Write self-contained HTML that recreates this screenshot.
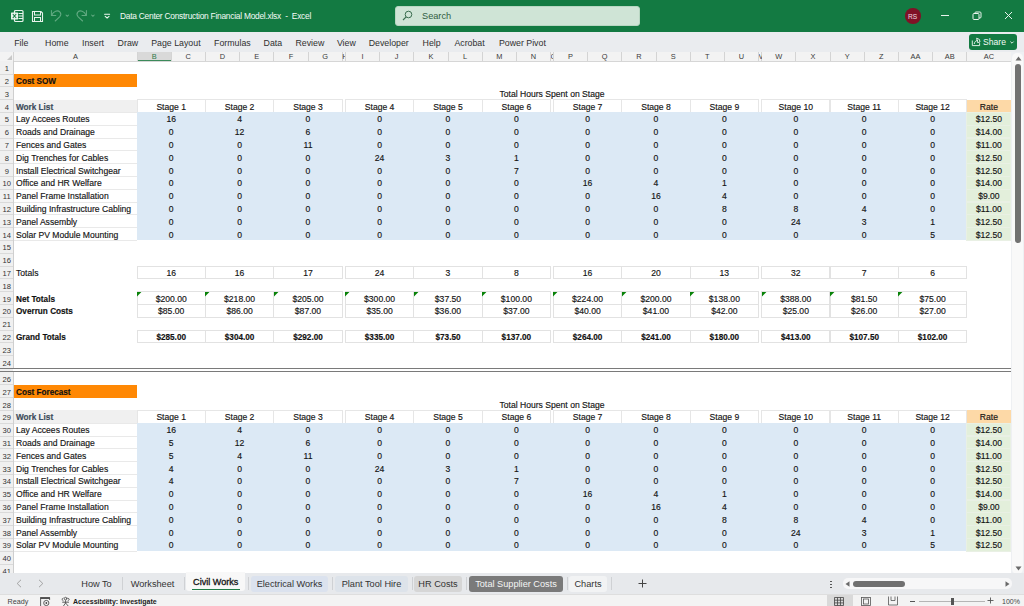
<!DOCTYPE html><html><head><meta charset="utf-8"><title>Excel</title><style>
*{margin:0;padding:0;box-sizing:border-box}
html,body{width:1024px;height:606px;overflow:hidden;background:#fff;font-family:"Liberation Sans", sans-serif;}
body{position:relative}
.a{position:absolute}
.t{position:absolute;white-space:nowrap;font-size:8.6px;color:#141414;line-height:12px;height:12px;-webkit-text-stroke:0.15px #141414}
.c{text-align:center}
.b{font-weight:bold}
.t[style*=bold]{font-size:8.2px}
.hl{position:absolute;height:1px}
.vl{position:absolute;width:1px}
</style></head><body>
<div class="a" style="left:0;top:0;width:1024px;height:32px;background:#137a42"></div>
<svg class="a" style="left:9.5px;top:9px" width="14" height="14" viewBox="0 0 14 14"><rect x="4.5" y="1.5" width="8.5" height="11" rx="1" fill="none" stroke="#e8f3ec" stroke-width="1.2"/><line x1="8.5" y1="4.5" x2="13" y2="4.5" stroke="#e8f3ec" stroke-width="1"/><line x1="8.5" y1="7" x2="13" y2="7" stroke="#e8f3ec" stroke-width="1"/><line x1="8.5" y1="9.5" x2="13" y2="9.5" stroke="#e8f3ec" stroke-width="1"/><rect x="1" y="3.5" width="7" height="7" rx="0.5" fill="#e8f3ec"/><path d="M2.8 5 L6.2 9 M6.2 5 L2.8 9" stroke="#137a42" stroke-width="1.1"/></svg>
<svg class="a" style="left:31px;top:10px" width="13" height="13" viewBox="0 0 13 13"><path d="M1.5 1.5 H10 L11.5 3 V11.5 H1.5 Z" fill="none" stroke="#e8f3ec" stroke-width="1.1"/><rect x="3.5" y="1.5" width="6" height="3.5" fill="none" stroke="#e8f3ec" stroke-width="1"/><rect x="3.5" y="7.5" width="6" height="4" fill="none" stroke="#e8f3ec" stroke-width="1"/></svg>
<svg class="a" style="left:0;top:0" width="120" height="32" viewBox="0 0 120 32"><g fill="none" stroke="#62aa82" stroke-width="1.05" stroke-linecap="round" stroke-linejoin="round"><path d="M51.4 10.6 V15.4 H55.8"/><path d="M51.8 15 C53.5 11.2 57.6 9.6 60 12.2 C61.3 13.8 60.8 15.6 59.6 16.8 L55.2 21"/><path d="M66 15 L67.3 16.3 L68.6 15"/><path d="M86.4 10.6 V15.4 H82"/><path d="M86 15 C84.3 11.2 80.2 9.6 77.8 12.2 C76.5 13.8 77 15.6 78.2 16.8 L82.6 21"/><path d="M91.6 15 L92.9 16.3 L94.2 15"/></g><g fill="none" stroke="#eef7f1" stroke-width="1.1" stroke-linecap="round"><path d="M104.6 14.2 H109.6"/><path d="M105.2 16.4 L107.1 18 L109 16.4"/></g></svg>
<div class="a" style="left:120px;top:10px;font-size:8.4px;letter-spacing:-0.25px;color:#f4faf6;white-space:nowrap;line-height:12px">Data Center Construction Financial Model.xlsx&nbsp; -&nbsp; Excel</div>
<div class="a" style="left:395px;top:5.5px;width:245px;height:20.5px;background:#cfe4d6;border-radius:3px;border:1px solid #b8d6c2"></div>
<svg class="a" style="left:402px;top:10px" width="11" height="11" viewBox="0 0 11 11"><circle cx="6.5" cy="4.5" r="3.3" fill="none" stroke="#3b6e50" stroke-width="1"/><line x1="4.2" y1="6.8" x2="1" y2="10" stroke="#3b6e50" stroke-width="1.1"/></svg>
<div class="a" style="left:422px;top:10px;font-size:9.2px;color:#2f5d42;line-height:12px">Search</div>
<div class="a" style="left:905px;top:8px;width:15.5px;height:15.5px;border-radius:50%;background:#7f1226"></div>
<div class="a" style="left:904.8px;top:11.5px;width:15.5px;text-align:center;font-size:6.6px;color:#f2dfe2;line-height:9px">RS</div>
<div class="a" style="left:941px;top:15px;width:7.5px;height:1px;background:#e8f3ec"></div>
<svg class="a" style="left:972px;top:11px" width="10" height="10" viewBox="0 0 10 10"><rect x="1" y="2.5" width="6" height="6" rx="1" fill="none" stroke="#e8f3ec" stroke-width="1"/><path d="M3 2.5 V1.8 Q3 1 4 1 H8 Q9 1 9 2 V6 Q9 7 8 7 H7" fill="none" stroke="#e8f3ec" stroke-width="1"/></svg>
<svg class="a" style="left:1003.5px;top:11px" width="9" height="9" viewBox="0 0 9 9"><path d="M1 1 L8 8 M8 1 L1 8" stroke="#e8f3ec" stroke-width="1"/></svg>
<div class="a" style="left:0;top:32px;width:1024px;height:19.5px;background:#eaecef"></div>
<div class="a" style="left:14.2px;top:37px;font-size:8.8px;color:#303030;line-height:12px;white-space:nowrap">File</div>
<div class="a" style="left:45.1px;top:37px;font-size:8.8px;color:#303030;line-height:12px;white-space:nowrap">Home</div>
<div class="a" style="left:82px;top:37px;font-size:8.8px;color:#303030;line-height:12px;white-space:nowrap">Insert</div>
<div class="a" style="left:117.6px;top:37px;font-size:8.8px;color:#303030;line-height:12px;white-space:nowrap">Draw</div>
<div class="a" style="left:151.2px;top:37px;font-size:8.8px;color:#303030;line-height:12px;white-space:nowrap">Page Layout</div>
<div class="a" style="left:214.1px;top:37px;font-size:8.8px;color:#303030;line-height:12px;white-space:nowrap">Formulas</div>
<div class="a" style="left:263.6px;top:37px;font-size:8.8px;color:#303030;line-height:12px;white-space:nowrap">Data</div>
<div class="a" style="left:295.4px;top:37px;font-size:8.8px;color:#303030;line-height:12px;white-space:nowrap">Review</div>
<div class="a" style="left:336.9px;top:37px;font-size:8.8px;color:#303030;line-height:12px;white-space:nowrap">View</div>
<div class="a" style="left:368.7px;top:37px;font-size:8.8px;color:#303030;line-height:12px;white-space:nowrap">Developer</div>
<div class="a" style="left:422.6px;top:37px;font-size:8.8px;color:#303030;line-height:12px;white-space:nowrap">Help</div>
<div class="a" style="left:454.4px;top:37px;font-size:8.8px;color:#303030;line-height:12px;white-space:nowrap">Acrobat</div>
<div class="a" style="left:498.9px;top:37px;font-size:8.8px;color:#303030;line-height:12px;white-space:nowrap">Power Pivot</div>
<div class="a" style="left:969px;top:34px;width:47.5px;height:16px;background:#137a42;border-radius:3px"></div>
<svg class="a" style="left:960px;top:30px" width="64" height="26" viewBox="0 0 64 26"><g fill="none" stroke="#f2f8f4" stroke-width="0.9" stroke-linejoin="round"><path d="M12.3 10.5 V15.6 H19.6 V13.2"/><path d="M14.2 14 C14.6 11.6 16 10.6 18 10.2"/><path d="M16.6 8.2 L19.4 9.4 L20 12 L17.6 12.6 Z"/><path d="M50.4 11.6 L52 13.2 L53.6 11.6"/></g></svg>
<div class="a" style="left:983px;top:36.5px;font-size:8.6px;color:#f4faf6;line-height:10px">Share</div>
<div class="a" style="left:0;top:52px;width:1011px;height:520.6px;background:#fff"></div>
<div class="a" style="left:0;top:52px;width:1011px;height:9.6px;background:#f3f3f3;border-bottom:1px solid #d6d6d6"></div>
<div class="a" style="left:137px;top:52px;width:34.2px;height:9.2px;background:#d9d9d9"></div>
<div class="a" style="left:137px;top:60px;width:34.2px;height:1.4px;background:#3c8a5a"></div>
<svg class="a" style="left:7px;top:54.5px" width="5" height="5" viewBox="0 0 5 5"><path d="M5 0 V5 H0 Z" fill="#c8c8c8"/></svg>
<div class="vl" style="left:136.5px;top:52px;height:9.2px;background:#d4d4d4"></div>
<div class="a" style="left:14px;top:52px;width:123px;text-align:center;font-size:7.4px;color:#3a3a3a;line-height:9px">A</div>
<div class="vl" style="left:170.7px;top:52px;height:9.2px;background:#d4d4d4"></div>
<div class="a" style="left:137px;top:52px;width:34.2px;text-align:center;font-size:7.4px;color:#2f7a4a;line-height:9px">B</div>
<div class="vl" style="left:204.9px;top:52px;height:9.2px;background:#d4d4d4"></div>
<div class="a" style="left:171.2px;top:52px;width:34.2px;text-align:center;font-size:7.4px;color:#3a3a3a;line-height:9px">C</div>
<div class="vl" style="left:239.1px;top:52px;height:9.2px;background:#d4d4d4"></div>
<div class="a" style="left:205.4px;top:52px;width:34.2px;text-align:center;font-size:7.4px;color:#3a3a3a;line-height:9px">D</div>
<div class="vl" style="left:273.3px;top:52px;height:9.2px;background:#d4d4d4"></div>
<div class="a" style="left:239.6px;top:52px;width:34.2px;text-align:center;font-size:7.4px;color:#3a3a3a;line-height:9px">E</div>
<div class="vl" style="left:307.5px;top:52px;height:9.2px;background:#d4d4d4"></div>
<div class="a" style="left:273.8px;top:52px;width:34.2px;text-align:center;font-size:7.4px;color:#3a3a3a;line-height:9px">F</div>
<div class="vl" style="left:341.7px;top:52px;height:9.2px;background:#d4d4d4"></div>
<div class="a" style="left:308px;top:52px;width:34.2px;text-align:center;font-size:7.4px;color:#3a3a3a;line-height:9px">G</div>
<div class="vl" style="left:344.9px;top:52px;height:9.2px;background:#d4d4d4"></div>
<div class="a" style="left:342.2px;top:52px;width:3.2px;overflow:hidden;text-align:center;font-size:7.6px;color:#3a3a3a;line-height:9px">H</div>
<div class="vl" style="left:379.1px;top:52px;height:9.2px;background:#d4d4d4"></div>
<div class="a" style="left:345.4px;top:52px;width:34.2px;text-align:center;font-size:7.4px;color:#3a3a3a;line-height:9px">I</div>
<div class="vl" style="left:413.3px;top:52px;height:9.2px;background:#d4d4d4"></div>
<div class="a" style="left:379.6px;top:52px;width:34.2px;text-align:center;font-size:7.4px;color:#3a3a3a;line-height:9px">J</div>
<div class="vl" style="left:447.5px;top:52px;height:9.2px;background:#d4d4d4"></div>
<div class="a" style="left:413.8px;top:52px;width:34.2px;text-align:center;font-size:7.4px;color:#3a3a3a;line-height:9px">K</div>
<div class="vl" style="left:481.7px;top:52px;height:9.2px;background:#d4d4d4"></div>
<div class="a" style="left:448px;top:52px;width:34.2px;text-align:center;font-size:7.4px;color:#3a3a3a;line-height:9px">L</div>
<div class="vl" style="left:515.9px;top:52px;height:9.2px;background:#d4d4d4"></div>
<div class="a" style="left:482.2px;top:52px;width:34.2px;text-align:center;font-size:7.4px;color:#3a3a3a;line-height:9px">M</div>
<div class="vl" style="left:550.1px;top:52px;height:9.2px;background:#d4d4d4"></div>
<div class="a" style="left:516.4px;top:52px;width:34.2px;text-align:center;font-size:7.4px;color:#3a3a3a;line-height:9px">N</div>
<div class="vl" style="left:552.9px;top:52px;height:9.2px;background:#d4d4d4"></div>
<div class="a" style="left:550.6px;top:52px;width:2.8px;overflow:hidden;text-align:center;font-size:7.6px;color:#3a3a3a;line-height:9px">O</div>
<div class="vl" style="left:587.1px;top:52px;height:9.2px;background:#d4d4d4"></div>
<div class="a" style="left:553.4px;top:52px;width:34.2px;text-align:center;font-size:7.4px;color:#3a3a3a;line-height:9px">P</div>
<div class="vl" style="left:621.3px;top:52px;height:9.2px;background:#d4d4d4"></div>
<div class="a" style="left:587.6px;top:52px;width:34.2px;text-align:center;font-size:7.4px;color:#3a3a3a;line-height:9px">Q</div>
<div class="vl" style="left:655.5px;top:52px;height:9.2px;background:#d4d4d4"></div>
<div class="a" style="left:621.8px;top:52px;width:34.2px;text-align:center;font-size:7.4px;color:#3a3a3a;line-height:9px">R</div>
<div class="vl" style="left:689.7px;top:52px;height:9.2px;background:#d4d4d4"></div>
<div class="a" style="left:656px;top:52px;width:34.2px;text-align:center;font-size:7.4px;color:#3a3a3a;line-height:9px">S</div>
<div class="vl" style="left:723.9px;top:52px;height:9.2px;background:#d4d4d4"></div>
<div class="a" style="left:690.2px;top:52px;width:34.2px;text-align:center;font-size:7.4px;color:#3a3a3a;line-height:9px">T</div>
<div class="vl" style="left:758.1px;top:52px;height:9.2px;background:#d4d4d4"></div>
<div class="a" style="left:724.4px;top:52px;width:34.2px;text-align:center;font-size:7.4px;color:#3a3a3a;line-height:9px">U</div>
<div class="vl" style="left:761.1px;top:52px;height:9.2px;background:#d4d4d4"></div>
<div class="a" style="left:758.6px;top:52px;width:3px;overflow:hidden;text-align:center;font-size:7.6px;color:#3a3a3a;line-height:9px">V</div>
<div class="vl" style="left:795.3px;top:52px;height:9.2px;background:#d4d4d4"></div>
<div class="a" style="left:761.6px;top:52px;width:34.2px;text-align:center;font-size:7.4px;color:#3a3a3a;line-height:9px">W</div>
<div class="vl" style="left:829.5px;top:52px;height:9.2px;background:#d4d4d4"></div>
<div class="a" style="left:795.8px;top:52px;width:34.2px;text-align:center;font-size:7.4px;color:#3a3a3a;line-height:9px">X</div>
<div class="vl" style="left:863.7px;top:52px;height:9.2px;background:#d4d4d4"></div>
<div class="a" style="left:830px;top:52px;width:34.2px;text-align:center;font-size:7.4px;color:#3a3a3a;line-height:9px">Y</div>
<div class="vl" style="left:897.9px;top:52px;height:9.2px;background:#d4d4d4"></div>
<div class="a" style="left:864.2px;top:52px;width:34.2px;text-align:center;font-size:7.4px;color:#3a3a3a;line-height:9px">Z</div>
<div class="vl" style="left:932.1px;top:52px;height:9.2px;background:#d4d4d4"></div>
<div class="a" style="left:898.4px;top:52px;width:34.2px;text-align:center;font-size:7.4px;color:#3a3a3a;line-height:9px">AA</div>
<div class="vl" style="left:966.3px;top:52px;height:9.2px;background:#d4d4d4"></div>
<div class="a" style="left:932.6px;top:52px;width:34.2px;text-align:center;font-size:7.4px;color:#3a3a3a;line-height:9px">AB</div>
<div class="vl" style="left:1010.5px;top:52px;height:9.2px;background:#d4d4d4"></div>
<div class="a" style="left:966.8px;top:52px;width:44.2px;text-align:center;font-size:7.4px;color:#3a3a3a;line-height:9px">AC</div>
<div class="vl" style="left:12.5px;top:52px;height:9.2px;background:#d4d4d4"></div>
<div class="a" style="left:0;top:61.2px;width:14px;height:511.40000000000003px;background:#f0f0f0;border-right:1px solid #cfcfcf"></div>
<div class="a" style="left:0;top:61.2px;width:13.5px;height:12.8px;text-align:center;font-size:7.6px;color:#333;line-height:16px;overflow:hidden">1</div>
<div class="hl" style="left:0;top:73.5px;width:13px;background:#dadada"></div>
<div class="a" style="left:0;top:74px;width:13.5px;height:12.8px;text-align:center;font-size:7.6px;color:#333;line-height:16px;overflow:hidden">2</div>
<div class="hl" style="left:0;top:86.3px;width:13px;background:#dadada"></div>
<div class="a" style="left:0;top:86.8px;width:13.5px;height:12.8px;text-align:center;font-size:7.6px;color:#333;line-height:16px;overflow:hidden">3</div>
<div class="hl" style="left:0;top:99.1px;width:13px;background:#dadada"></div>
<div class="a" style="left:0;top:99.6px;width:13.5px;height:12.8px;text-align:center;font-size:7.6px;color:#333;line-height:16px;overflow:hidden">4</div>
<div class="hl" style="left:0;top:111.9px;width:13px;background:#dadada"></div>
<div class="a" style="left:0;top:112.4px;width:13.5px;height:12.8px;text-align:center;font-size:7.6px;color:#333;line-height:16px;overflow:hidden">5</div>
<div class="hl" style="left:0;top:124.7px;width:13px;background:#dadada"></div>
<div class="a" style="left:0;top:125.2px;width:13.5px;height:12.8px;text-align:center;font-size:7.6px;color:#333;line-height:16px;overflow:hidden">6</div>
<div class="hl" style="left:0;top:137.5px;width:13px;background:#dadada"></div>
<div class="a" style="left:0;top:138px;width:13.5px;height:12.8px;text-align:center;font-size:7.6px;color:#333;line-height:16px;overflow:hidden">7</div>
<div class="hl" style="left:0;top:150.3px;width:13px;background:#dadada"></div>
<div class="a" style="left:0;top:150.8px;width:13.5px;height:12.8px;text-align:center;font-size:7.6px;color:#333;line-height:16px;overflow:hidden">8</div>
<div class="hl" style="left:0;top:163.1px;width:13px;background:#dadada"></div>
<div class="a" style="left:0;top:163.6px;width:13.5px;height:12.8px;text-align:center;font-size:7.6px;color:#333;line-height:16px;overflow:hidden">9</div>
<div class="hl" style="left:0;top:175.9px;width:13px;background:#dadada"></div>
<div class="a" style="left:0;top:176.4px;width:13.5px;height:12.8px;text-align:center;font-size:7.6px;color:#333;line-height:16px;overflow:hidden">10</div>
<div class="hl" style="left:0;top:188.7px;width:13px;background:#dadada"></div>
<div class="a" style="left:0;top:189.2px;width:13.5px;height:12.8px;text-align:center;font-size:7.6px;color:#333;line-height:16px;overflow:hidden">11</div>
<div class="hl" style="left:0;top:201.5px;width:13px;background:#dadada"></div>
<div class="a" style="left:0;top:202px;width:13.5px;height:12.8px;text-align:center;font-size:7.6px;color:#333;line-height:16px;overflow:hidden">12</div>
<div class="hl" style="left:0;top:214.3px;width:13px;background:#dadada"></div>
<div class="a" style="left:0;top:214.8px;width:13.5px;height:12.8px;text-align:center;font-size:7.6px;color:#333;line-height:16px;overflow:hidden">13</div>
<div class="hl" style="left:0;top:227.1px;width:13px;background:#dadada"></div>
<div class="a" style="left:0;top:227.6px;width:13.5px;height:12.8px;text-align:center;font-size:7.6px;color:#333;line-height:16px;overflow:hidden">14</div>
<div class="hl" style="left:0;top:239.9px;width:13px;background:#dadada"></div>
<div class="a" style="left:0;top:240.4px;width:13.5px;height:12.8px;text-align:center;font-size:7.6px;color:#333;line-height:16px;overflow:hidden">15</div>
<div class="hl" style="left:0;top:252.7px;width:13px;background:#dadada"></div>
<div class="a" style="left:0;top:253.2px;width:13.5px;height:12.8px;text-align:center;font-size:7.6px;color:#333;line-height:16px;overflow:hidden">16</div>
<div class="hl" style="left:0;top:265.5px;width:13px;background:#dadada"></div>
<div class="a" style="left:0;top:266px;width:13.5px;height:12.8px;text-align:center;font-size:7.6px;color:#333;line-height:16px;overflow:hidden">17</div>
<div class="hl" style="left:0;top:278.3px;width:13px;background:#dadada"></div>
<div class="a" style="left:0;top:278.8px;width:13.5px;height:12.8px;text-align:center;font-size:7.6px;color:#333;line-height:16px;overflow:hidden">18</div>
<div class="hl" style="left:0;top:291.1px;width:13px;background:#dadada"></div>
<div class="a" style="left:0;top:291.6px;width:13.5px;height:12.8px;text-align:center;font-size:7.6px;color:#333;line-height:16px;overflow:hidden">19</div>
<div class="hl" style="left:0;top:303.9px;width:13px;background:#dadada"></div>
<div class="a" style="left:0;top:304.4px;width:13.5px;height:12.8px;text-align:center;font-size:7.6px;color:#333;line-height:16px;overflow:hidden">20</div>
<div class="hl" style="left:0;top:316.7px;width:13px;background:#dadada"></div>
<div class="a" style="left:0;top:317.2px;width:13.5px;height:12.8px;text-align:center;font-size:7.6px;color:#333;line-height:16px;overflow:hidden">21</div>
<div class="hl" style="left:0;top:329.5px;width:13px;background:#dadada"></div>
<div class="a" style="left:0;top:330px;width:13.5px;height:12.8px;text-align:center;font-size:7.6px;color:#333;line-height:16px;overflow:hidden">22</div>
<div class="hl" style="left:0;top:342.3px;width:13px;background:#dadada"></div>
<div class="a" style="left:0;top:342.8px;width:13.5px;height:12.8px;text-align:center;font-size:7.6px;color:#333;line-height:16px;overflow:hidden">23</div>
<div class="hl" style="left:0;top:355.1px;width:13px;background:#dadada"></div>
<div class="a" style="left:0;top:355.6px;width:13.5px;height:12.8px;text-align:center;font-size:7.6px;color:#333;line-height:16px;overflow:hidden">24</div>
<div class="hl" style="left:0;top:367.9px;width:13px;background:#dadada"></div>
<div class="a" style="left:0;top:372px;width:13.5px;height:12.8px;text-align:center;font-size:7.6px;color:#333;line-height:16px;overflow:hidden">26</div>
<div class="hl" style="left:0;top:384.3px;width:13px;background:#dadada"></div>
<div class="a" style="left:0;top:384.8px;width:13.5px;height:12.8px;text-align:center;font-size:7.6px;color:#333;line-height:16px;overflow:hidden">27</div>
<div class="hl" style="left:0;top:397.1px;width:13px;background:#dadada"></div>
<div class="a" style="left:0;top:397.6px;width:13.5px;height:12.8px;text-align:center;font-size:7.6px;color:#333;line-height:16px;overflow:hidden">28</div>
<div class="hl" style="left:0;top:409.9px;width:13px;background:#dadada"></div>
<div class="a" style="left:0;top:410.4px;width:13.5px;height:12.8px;text-align:center;font-size:7.6px;color:#333;line-height:16px;overflow:hidden">29</div>
<div class="hl" style="left:0;top:422.7px;width:13px;background:#dadada"></div>
<div class="a" style="left:0;top:423.2px;width:13.5px;height:12.8px;text-align:center;font-size:7.6px;color:#333;line-height:16px;overflow:hidden">30</div>
<div class="hl" style="left:0;top:435.5px;width:13px;background:#dadada"></div>
<div class="a" style="left:0;top:436px;width:13.5px;height:12.8px;text-align:center;font-size:7.6px;color:#333;line-height:16px;overflow:hidden">31</div>
<div class="hl" style="left:0;top:448.3px;width:13px;background:#dadada"></div>
<div class="a" style="left:0;top:448.8px;width:13.5px;height:12.8px;text-align:center;font-size:7.6px;color:#333;line-height:16px;overflow:hidden">32</div>
<div class="hl" style="left:0;top:461.1px;width:13px;background:#dadada"></div>
<div class="a" style="left:0;top:461.6px;width:13.5px;height:12.8px;text-align:center;font-size:7.6px;color:#333;line-height:16px;overflow:hidden">33</div>
<div class="hl" style="left:0;top:473.9px;width:13px;background:#dadada"></div>
<div class="a" style="left:0;top:474.4px;width:13.5px;height:12.8px;text-align:center;font-size:7.6px;color:#333;line-height:16px;overflow:hidden">34</div>
<div class="hl" style="left:0;top:486.7px;width:13px;background:#dadada"></div>
<div class="a" style="left:0;top:487.2px;width:13.5px;height:12.8px;text-align:center;font-size:7.6px;color:#333;line-height:16px;overflow:hidden">35</div>
<div class="hl" style="left:0;top:499.5px;width:13px;background:#dadada"></div>
<div class="a" style="left:0;top:500px;width:13.5px;height:12.8px;text-align:center;font-size:7.6px;color:#333;line-height:16px;overflow:hidden">36</div>
<div class="hl" style="left:0;top:512.3px;width:13px;background:#dadada"></div>
<div class="a" style="left:0;top:512.8px;width:13.5px;height:12.8px;text-align:center;font-size:7.6px;color:#333;line-height:16px;overflow:hidden">37</div>
<div class="hl" style="left:0;top:525.1px;width:13px;background:#dadada"></div>
<div class="a" style="left:0;top:525.6px;width:13.5px;height:12.8px;text-align:center;font-size:7.6px;color:#333;line-height:16px;overflow:hidden">38</div>
<div class="hl" style="left:0;top:537.9px;width:13px;background:#dadada"></div>
<div class="a" style="left:0;top:538.4px;width:13.5px;height:12.8px;text-align:center;font-size:7.6px;color:#333;line-height:16px;overflow:hidden">39</div>
<div class="hl" style="left:0;top:550.7px;width:13px;background:#dadada"></div>
<div class="a" style="left:0;top:551.2px;width:13.5px;height:12.8px;text-align:center;font-size:7.6px;color:#333;line-height:16px;overflow:hidden">40</div>
<div class="hl" style="left:0;top:563.5px;width:13px;background:#dadada"></div>
<div class="a" style="left:0;top:564px;width:13.5px;height:8.6px;text-align:center;font-size:7.6px;color:#333;line-height:16px;overflow:hidden">41</div>
<div class="hl" style="left:0;top:368px;width:1011px;background:#7a7a7a;height:1px"></div>
<div class="a" style="left:0;top:369px;width:1011px;height:2.5px;background:#fff"></div>
<div class="a" style="left:0;top:369px;width:13px;height:2.5px;background:#f0f0f0"></div>
<div class="hl" style="left:0;top:371.2px;width:1011px;background:#7a7a7a;height:1px"></div>
<div class="a" style="left:14px;top:74px;width:123px;height:12.8px;background:#ff8804"></div>
<div class="t" style="left:14px;top:76px;width:123px;text-align:left;padding-left:2px;font-weight:bold;color:#111;">Cost SOW</div>
<div class="t" style="left:482px;top:88px;width:140px;text-align:center;">Total Hours Spent on Stage</div>
<div class="a" style="left:14px;top:99.6px;width:123px;height:12.8px;background:#f0f0f0"></div>
<div class="t" style="left:14px;top:102px;width:123px;text-align:left;padding-left:2px;font-weight:bold;color:#44546a;">Work List</div>
<div class="a" style="left:136.5px;top:99.1px;width:69.4px;height:13.8px;border:1px solid #e6e6e6"></div>
<div class="t" style="left:137px;top:101px;width:68.4px;text-align:center;">Stage 1</div>
<div class="a" style="left:204.9px;top:99.1px;width:69.4px;height:13.8px;border:1px solid #e6e6e6"></div>
<div class="t" style="left:205.4px;top:101px;width:68.4px;text-align:center;">Stage 2</div>
<div class="a" style="left:273.3px;top:99.1px;width:69.4px;height:13.8px;border:1px solid #e6e6e6"></div>
<div class="t" style="left:273.8px;top:101px;width:68.4px;text-align:center;">Stage 3</div>
<div class="a" style="left:344.9px;top:99.1px;width:69.4px;height:13.8px;border:1px solid #e6e6e6"></div>
<div class="t" style="left:345.4px;top:101px;width:68.4px;text-align:center;">Stage 4</div>
<div class="a" style="left:413.3px;top:99.1px;width:69.4px;height:13.8px;border:1px solid #e6e6e6"></div>
<div class="t" style="left:413.8px;top:101px;width:68.4px;text-align:center;">Stage 5</div>
<div class="a" style="left:481.7px;top:99.1px;width:69.4px;height:13.8px;border:1px solid #e6e6e6"></div>
<div class="t" style="left:482.2px;top:101px;width:68.4px;text-align:center;">Stage 6</div>
<div class="a" style="left:552.9px;top:99.1px;width:69.4px;height:13.8px;border:1px solid #e6e6e6"></div>
<div class="t" style="left:553.4px;top:101px;width:68.4px;text-align:center;">Stage 7</div>
<div class="a" style="left:621.3px;top:99.1px;width:69.4px;height:13.8px;border:1px solid #e6e6e6"></div>
<div class="t" style="left:621.8px;top:101px;width:68.4px;text-align:center;">Stage 8</div>
<div class="a" style="left:689.7px;top:99.1px;width:69.4px;height:13.8px;border:1px solid #e6e6e6"></div>
<div class="t" style="left:690.2px;top:101px;width:68.4px;text-align:center;">Stage 9</div>
<div class="a" style="left:761.1px;top:99.1px;width:69.4px;height:13.8px;border:1px solid #e6e6e6"></div>
<div class="t" style="left:761.6px;top:101px;width:68.4px;text-align:center;">Stage 10</div>
<div class="a" style="left:829.5px;top:99.1px;width:69.4px;height:13.8px;border:1px solid #e6e6e6"></div>
<div class="t" style="left:830px;top:101px;width:68.4px;text-align:center;">Stage 11</div>
<div class="a" style="left:897.9px;top:99.1px;width:69.4px;height:13.8px;border:1px solid #e6e6e6"></div>
<div class="t" style="left:898.4px;top:101px;width:68.4px;text-align:center;">Stage 12</div>
<div class="a" style="left:966.8px;top:99.6px;width:44.2px;height:12.8px;background:#fdd9a7"></div>
<div class="t" style="left:966.8px;top:101px;width:44.2px;text-align:center;">Rate</div>
<div class="a" style="left:137px;top:112.4px;width:829.8px;height:128px;background:#dce9f5"></div>
<div class="a" style="left:966.8px;top:112.4px;width:44.2px;height:128px;background:#e3efdb"></div>
<div class="hl" style="left:14px;top:111.9px;width:123px;background:#e9e9e9"></div>
<div class="hl" style="left:14px;top:124.7px;width:123px;background:#e9e9e9"></div>
<div class="a" style="left:966.3px;top:111.9px;width:45.2px;height:13.8px;border:1px solid #e9f0e4"></div>
<div class="t" style="left:14px;top:113px;width:123px;text-align:left;padding-left:2px;">Lay Accees Routes</div>
<div class="t" style="left:137px;top:113px;width:68.4px;text-align:center;">16</div>
<div class="t" style="left:205.4px;top:113px;width:68.4px;text-align:center;">4</div>
<div class="t" style="left:273.8px;top:113px;width:68.4px;text-align:center;">0</div>
<div class="t" style="left:345.4px;top:113px;width:68.4px;text-align:center;">0</div>
<div class="t" style="left:413.8px;top:113px;width:68.4px;text-align:center;">0</div>
<div class="t" style="left:482.2px;top:113px;width:68.4px;text-align:center;">0</div>
<div class="t" style="left:553.4px;top:113px;width:68.4px;text-align:center;">0</div>
<div class="t" style="left:621.8px;top:113px;width:68.4px;text-align:center;">0</div>
<div class="t" style="left:690.2px;top:113px;width:68.4px;text-align:center;">0</div>
<div class="t" style="left:761.6px;top:113px;width:68.4px;text-align:center;">0</div>
<div class="t" style="left:830px;top:113px;width:68.4px;text-align:center;">0</div>
<div class="t" style="left:898.4px;top:113px;width:68.4px;text-align:center;">0</div>
<div class="t" style="left:966.8px;top:113px;width:44.2px;text-align:center;">$12.50</div>
<div class="hl" style="left:14px;top:124.7px;width:123px;background:#e9e9e9"></div>
<div class="hl" style="left:14px;top:137.5px;width:123px;background:#e9e9e9"></div>
<div class="a" style="left:966.3px;top:124.7px;width:45.2px;height:13.8px;border:1px solid #e9f0e4"></div>
<div class="t" style="left:14px;top:126px;width:123px;text-align:left;padding-left:2px;">Roads and Drainage</div>
<div class="t" style="left:137px;top:126px;width:68.4px;text-align:center;">0</div>
<div class="t" style="left:205.4px;top:126px;width:68.4px;text-align:center;">12</div>
<div class="t" style="left:273.8px;top:126px;width:68.4px;text-align:center;">6</div>
<div class="t" style="left:345.4px;top:126px;width:68.4px;text-align:center;">0</div>
<div class="t" style="left:413.8px;top:126px;width:68.4px;text-align:center;">0</div>
<div class="t" style="left:482.2px;top:126px;width:68.4px;text-align:center;">0</div>
<div class="t" style="left:553.4px;top:126px;width:68.4px;text-align:center;">0</div>
<div class="t" style="left:621.8px;top:126px;width:68.4px;text-align:center;">0</div>
<div class="t" style="left:690.2px;top:126px;width:68.4px;text-align:center;">0</div>
<div class="t" style="left:761.6px;top:126px;width:68.4px;text-align:center;">0</div>
<div class="t" style="left:830px;top:126px;width:68.4px;text-align:center;">0</div>
<div class="t" style="left:898.4px;top:126px;width:68.4px;text-align:center;">0</div>
<div class="t" style="left:966.8px;top:126px;width:44.2px;text-align:center;">$14.00</div>
<div class="hl" style="left:14px;top:137.5px;width:123px;background:#e9e9e9"></div>
<div class="hl" style="left:14px;top:150.3px;width:123px;background:#e9e9e9"></div>
<div class="a" style="left:966.3px;top:137.5px;width:45.2px;height:13.8px;border:1px solid #e9f0e4"></div>
<div class="t" style="left:14px;top:139px;width:123px;text-align:left;padding-left:2px;">Fences and Gates</div>
<div class="t" style="left:137px;top:139px;width:68.4px;text-align:center;">0</div>
<div class="t" style="left:205.4px;top:139px;width:68.4px;text-align:center;">0</div>
<div class="t" style="left:273.8px;top:139px;width:68.4px;text-align:center;">11</div>
<div class="t" style="left:345.4px;top:139px;width:68.4px;text-align:center;">0</div>
<div class="t" style="left:413.8px;top:139px;width:68.4px;text-align:center;">0</div>
<div class="t" style="left:482.2px;top:139px;width:68.4px;text-align:center;">0</div>
<div class="t" style="left:553.4px;top:139px;width:68.4px;text-align:center;">0</div>
<div class="t" style="left:621.8px;top:139px;width:68.4px;text-align:center;">0</div>
<div class="t" style="left:690.2px;top:139px;width:68.4px;text-align:center;">0</div>
<div class="t" style="left:761.6px;top:139px;width:68.4px;text-align:center;">0</div>
<div class="t" style="left:830px;top:139px;width:68.4px;text-align:center;">0</div>
<div class="t" style="left:898.4px;top:139px;width:68.4px;text-align:center;">0</div>
<div class="t" style="left:966.8px;top:139px;width:44.2px;text-align:center;">$11.00</div>
<div class="hl" style="left:14px;top:150.3px;width:123px;background:#e9e9e9"></div>
<div class="hl" style="left:14px;top:163.1px;width:123px;background:#e9e9e9"></div>
<div class="a" style="left:966.3px;top:150.3px;width:45.2px;height:13.8px;border:1px solid #e9f0e4"></div>
<div class="t" style="left:14px;top:152px;width:123px;text-align:left;padding-left:2px;">Dig Trenches for Cables</div>
<div class="t" style="left:137px;top:152px;width:68.4px;text-align:center;">0</div>
<div class="t" style="left:205.4px;top:152px;width:68.4px;text-align:center;">0</div>
<div class="t" style="left:273.8px;top:152px;width:68.4px;text-align:center;">0</div>
<div class="t" style="left:345.4px;top:152px;width:68.4px;text-align:center;">24</div>
<div class="t" style="left:413.8px;top:152px;width:68.4px;text-align:center;">3</div>
<div class="t" style="left:482.2px;top:152px;width:68.4px;text-align:center;">1</div>
<div class="t" style="left:553.4px;top:152px;width:68.4px;text-align:center;">0</div>
<div class="t" style="left:621.8px;top:152px;width:68.4px;text-align:center;">0</div>
<div class="t" style="left:690.2px;top:152px;width:68.4px;text-align:center;">0</div>
<div class="t" style="left:761.6px;top:152px;width:68.4px;text-align:center;">0</div>
<div class="t" style="left:830px;top:152px;width:68.4px;text-align:center;">0</div>
<div class="t" style="left:898.4px;top:152px;width:68.4px;text-align:center;">0</div>
<div class="t" style="left:966.8px;top:152px;width:44.2px;text-align:center;">$12.50</div>
<div class="hl" style="left:14px;top:163.1px;width:123px;background:#e9e9e9"></div>
<div class="hl" style="left:14px;top:175.9px;width:123px;background:#e9e9e9"></div>
<div class="a" style="left:966.3px;top:163.1px;width:45.2px;height:13.8px;border:1px solid #e9f0e4"></div>
<div class="t" style="left:14px;top:165px;width:123px;text-align:left;padding-left:2px;">Install Electrical Switchgear</div>
<div class="t" style="left:137px;top:165px;width:68.4px;text-align:center;">0</div>
<div class="t" style="left:205.4px;top:165px;width:68.4px;text-align:center;">0</div>
<div class="t" style="left:273.8px;top:165px;width:68.4px;text-align:center;">0</div>
<div class="t" style="left:345.4px;top:165px;width:68.4px;text-align:center;">0</div>
<div class="t" style="left:413.8px;top:165px;width:68.4px;text-align:center;">0</div>
<div class="t" style="left:482.2px;top:165px;width:68.4px;text-align:center;">7</div>
<div class="t" style="left:553.4px;top:165px;width:68.4px;text-align:center;">0</div>
<div class="t" style="left:621.8px;top:165px;width:68.4px;text-align:center;">0</div>
<div class="t" style="left:690.2px;top:165px;width:68.4px;text-align:center;">0</div>
<div class="t" style="left:761.6px;top:165px;width:68.4px;text-align:center;">0</div>
<div class="t" style="left:830px;top:165px;width:68.4px;text-align:center;">0</div>
<div class="t" style="left:898.4px;top:165px;width:68.4px;text-align:center;">0</div>
<div class="t" style="left:966.8px;top:165px;width:44.2px;text-align:center;">$12.50</div>
<div class="hl" style="left:14px;top:175.9px;width:123px;background:#e9e9e9"></div>
<div class="hl" style="left:14px;top:188.7px;width:123px;background:#e9e9e9"></div>
<div class="a" style="left:966.3px;top:175.9px;width:45.2px;height:13.8px;border:1px solid #e9f0e4"></div>
<div class="t" style="left:14px;top:177px;width:123px;text-align:left;padding-left:2px;">Office and HR Welfare</div>
<div class="t" style="left:137px;top:177px;width:68.4px;text-align:center;">0</div>
<div class="t" style="left:205.4px;top:177px;width:68.4px;text-align:center;">0</div>
<div class="t" style="left:273.8px;top:177px;width:68.4px;text-align:center;">0</div>
<div class="t" style="left:345.4px;top:177px;width:68.4px;text-align:center;">0</div>
<div class="t" style="left:413.8px;top:177px;width:68.4px;text-align:center;">0</div>
<div class="t" style="left:482.2px;top:177px;width:68.4px;text-align:center;">0</div>
<div class="t" style="left:553.4px;top:177px;width:68.4px;text-align:center;">16</div>
<div class="t" style="left:621.8px;top:177px;width:68.4px;text-align:center;">4</div>
<div class="t" style="left:690.2px;top:177px;width:68.4px;text-align:center;">1</div>
<div class="t" style="left:761.6px;top:177px;width:68.4px;text-align:center;">0</div>
<div class="t" style="left:830px;top:177px;width:68.4px;text-align:center;">0</div>
<div class="t" style="left:898.4px;top:177px;width:68.4px;text-align:center;">0</div>
<div class="t" style="left:966.8px;top:177px;width:44.2px;text-align:center;">$14.00</div>
<div class="hl" style="left:14px;top:188.7px;width:123px;background:#e9e9e9"></div>
<div class="hl" style="left:14px;top:201.5px;width:123px;background:#e9e9e9"></div>
<div class="a" style="left:966.3px;top:188.7px;width:45.2px;height:13.8px;border:1px solid #e9f0e4"></div>
<div class="t" style="left:14px;top:190px;width:123px;text-align:left;padding-left:2px;">Panel Frame Installation</div>
<div class="t" style="left:137px;top:190px;width:68.4px;text-align:center;">0</div>
<div class="t" style="left:205.4px;top:190px;width:68.4px;text-align:center;">0</div>
<div class="t" style="left:273.8px;top:190px;width:68.4px;text-align:center;">0</div>
<div class="t" style="left:345.4px;top:190px;width:68.4px;text-align:center;">0</div>
<div class="t" style="left:413.8px;top:190px;width:68.4px;text-align:center;">0</div>
<div class="t" style="left:482.2px;top:190px;width:68.4px;text-align:center;">0</div>
<div class="t" style="left:553.4px;top:190px;width:68.4px;text-align:center;">0</div>
<div class="t" style="left:621.8px;top:190px;width:68.4px;text-align:center;">16</div>
<div class="t" style="left:690.2px;top:190px;width:68.4px;text-align:center;">4</div>
<div class="t" style="left:761.6px;top:190px;width:68.4px;text-align:center;">0</div>
<div class="t" style="left:830px;top:190px;width:68.4px;text-align:center;">0</div>
<div class="t" style="left:898.4px;top:190px;width:68.4px;text-align:center;">0</div>
<div class="t" style="left:966.8px;top:190px;width:44.2px;text-align:center;">$9.00</div>
<div class="hl" style="left:14px;top:201.5px;width:123px;background:#e9e9e9"></div>
<div class="hl" style="left:14px;top:214.3px;width:123px;background:#e9e9e9"></div>
<div class="a" style="left:966.3px;top:201.5px;width:45.2px;height:13.8px;border:1px solid #e9f0e4"></div>
<div class="t" style="left:14px;top:203px;width:123px;text-align:left;padding-left:2px;">Building Infrastructure Cabling</div>
<div class="t" style="left:137px;top:203px;width:68.4px;text-align:center;">0</div>
<div class="t" style="left:205.4px;top:203px;width:68.4px;text-align:center;">0</div>
<div class="t" style="left:273.8px;top:203px;width:68.4px;text-align:center;">0</div>
<div class="t" style="left:345.4px;top:203px;width:68.4px;text-align:center;">0</div>
<div class="t" style="left:413.8px;top:203px;width:68.4px;text-align:center;">0</div>
<div class="t" style="left:482.2px;top:203px;width:68.4px;text-align:center;">0</div>
<div class="t" style="left:553.4px;top:203px;width:68.4px;text-align:center;">0</div>
<div class="t" style="left:621.8px;top:203px;width:68.4px;text-align:center;">0</div>
<div class="t" style="left:690.2px;top:203px;width:68.4px;text-align:center;">8</div>
<div class="t" style="left:761.6px;top:203px;width:68.4px;text-align:center;">8</div>
<div class="t" style="left:830px;top:203px;width:68.4px;text-align:center;">4</div>
<div class="t" style="left:898.4px;top:203px;width:68.4px;text-align:center;">0</div>
<div class="t" style="left:966.8px;top:203px;width:44.2px;text-align:center;">$11.00</div>
<div class="hl" style="left:14px;top:214.3px;width:123px;background:#e9e9e9"></div>
<div class="hl" style="left:14px;top:227.1px;width:123px;background:#e9e9e9"></div>
<div class="a" style="left:966.3px;top:214.3px;width:45.2px;height:13.8px;border:1px solid #e9f0e4"></div>
<div class="t" style="left:14px;top:216px;width:123px;text-align:left;padding-left:2px;">Panel Assembly</div>
<div class="t" style="left:137px;top:216px;width:68.4px;text-align:center;">0</div>
<div class="t" style="left:205.4px;top:216px;width:68.4px;text-align:center;">0</div>
<div class="t" style="left:273.8px;top:216px;width:68.4px;text-align:center;">0</div>
<div class="t" style="left:345.4px;top:216px;width:68.4px;text-align:center;">0</div>
<div class="t" style="left:413.8px;top:216px;width:68.4px;text-align:center;">0</div>
<div class="t" style="left:482.2px;top:216px;width:68.4px;text-align:center;">0</div>
<div class="t" style="left:553.4px;top:216px;width:68.4px;text-align:center;">0</div>
<div class="t" style="left:621.8px;top:216px;width:68.4px;text-align:center;">0</div>
<div class="t" style="left:690.2px;top:216px;width:68.4px;text-align:center;">0</div>
<div class="t" style="left:761.6px;top:216px;width:68.4px;text-align:center;">24</div>
<div class="t" style="left:830px;top:216px;width:68.4px;text-align:center;">3</div>
<div class="t" style="left:898.4px;top:216px;width:68.4px;text-align:center;">1</div>
<div class="t" style="left:966.8px;top:216px;width:44.2px;text-align:center;">$12.50</div>
<div class="hl" style="left:14px;top:227.1px;width:123px;background:#e9e9e9"></div>
<div class="hl" style="left:14px;top:239.9px;width:123px;background:#e9e9e9"></div>
<div class="a" style="left:966.3px;top:227.1px;width:45.2px;height:13.8px;border:1px solid #e9f0e4"></div>
<div class="t" style="left:14px;top:229px;width:123px;text-align:left;padding-left:2px;">Solar PV Module Mounting</div>
<div class="t" style="left:137px;top:229px;width:68.4px;text-align:center;">0</div>
<div class="t" style="left:205.4px;top:229px;width:68.4px;text-align:center;">0</div>
<div class="t" style="left:273.8px;top:229px;width:68.4px;text-align:center;">0</div>
<div class="t" style="left:345.4px;top:229px;width:68.4px;text-align:center;">0</div>
<div class="t" style="left:413.8px;top:229px;width:68.4px;text-align:center;">0</div>
<div class="t" style="left:482.2px;top:229px;width:68.4px;text-align:center;">0</div>
<div class="t" style="left:553.4px;top:229px;width:68.4px;text-align:center;">0</div>
<div class="t" style="left:621.8px;top:229px;width:68.4px;text-align:center;">0</div>
<div class="t" style="left:690.2px;top:229px;width:68.4px;text-align:center;">0</div>
<div class="t" style="left:761.6px;top:229px;width:68.4px;text-align:center;">0</div>
<div class="t" style="left:830px;top:229px;width:68.4px;text-align:center;">0</div>
<div class="t" style="left:898.4px;top:229px;width:68.4px;text-align:center;">5</div>
<div class="t" style="left:966.8px;top:229px;width:44.2px;text-align:center;">$12.50</div>
<div class="a" style="left:14px;top:384.8px;width:123px;height:12.8px;background:#ff8804"></div>
<div class="t" style="left:14px;top:387px;width:123px;text-align:left;padding-left:2px;font-weight:bold;color:#111;">Cost Forecast</div>
<div class="t" style="left:482px;top:399px;width:140px;text-align:center;">Total Hours Spent on Stage</div>
<div class="a" style="left:14px;top:410.4px;width:123px;height:12.8px;background:#f0f0f0"></div>
<div class="t" style="left:14px;top:412px;width:123px;text-align:left;padding-left:2px;font-weight:bold;color:#44546a;">Work List</div>
<div class="a" style="left:136.5px;top:409.9px;width:69.4px;height:13.8px;border:1px solid #e6e6e6"></div>
<div class="t" style="left:137px;top:411px;width:68.4px;text-align:center;">Stage 1</div>
<div class="a" style="left:204.9px;top:409.9px;width:69.4px;height:13.8px;border:1px solid #e6e6e6"></div>
<div class="t" style="left:205.4px;top:411px;width:68.4px;text-align:center;">Stage 2</div>
<div class="a" style="left:273.3px;top:409.9px;width:69.4px;height:13.8px;border:1px solid #e6e6e6"></div>
<div class="t" style="left:273.8px;top:411px;width:68.4px;text-align:center;">Stage 3</div>
<div class="a" style="left:344.9px;top:409.9px;width:69.4px;height:13.8px;border:1px solid #e6e6e6"></div>
<div class="t" style="left:345.4px;top:411px;width:68.4px;text-align:center;">Stage 4</div>
<div class="a" style="left:413.3px;top:409.9px;width:69.4px;height:13.8px;border:1px solid #e6e6e6"></div>
<div class="t" style="left:413.8px;top:411px;width:68.4px;text-align:center;">Stage 5</div>
<div class="a" style="left:481.7px;top:409.9px;width:69.4px;height:13.8px;border:1px solid #e6e6e6"></div>
<div class="t" style="left:482.2px;top:411px;width:68.4px;text-align:center;">Stage 6</div>
<div class="a" style="left:552.9px;top:409.9px;width:69.4px;height:13.8px;border:1px solid #e6e6e6"></div>
<div class="t" style="left:553.4px;top:411px;width:68.4px;text-align:center;">Stage 7</div>
<div class="a" style="left:621.3px;top:409.9px;width:69.4px;height:13.8px;border:1px solid #e6e6e6"></div>
<div class="t" style="left:621.8px;top:411px;width:68.4px;text-align:center;">Stage 8</div>
<div class="a" style="left:689.7px;top:409.9px;width:69.4px;height:13.8px;border:1px solid #e6e6e6"></div>
<div class="t" style="left:690.2px;top:411px;width:68.4px;text-align:center;">Stage 9</div>
<div class="a" style="left:761.1px;top:409.9px;width:69.4px;height:13.8px;border:1px solid #e6e6e6"></div>
<div class="t" style="left:761.6px;top:411px;width:68.4px;text-align:center;">Stage 10</div>
<div class="a" style="left:829.5px;top:409.9px;width:69.4px;height:13.8px;border:1px solid #e6e6e6"></div>
<div class="t" style="left:830px;top:411px;width:68.4px;text-align:center;">Stage 11</div>
<div class="a" style="left:897.9px;top:409.9px;width:69.4px;height:13.8px;border:1px solid #e6e6e6"></div>
<div class="t" style="left:898.4px;top:411px;width:68.4px;text-align:center;">Stage 12</div>
<div class="a" style="left:966.8px;top:410.4px;width:44.2px;height:12.8px;background:#fdd9a7"></div>
<div class="t" style="left:966.8px;top:411px;width:44.2px;text-align:center;">Rate</div>
<div class="a" style="left:137px;top:423.2px;width:829.8px;height:128px;background:#dce9f5"></div>
<div class="a" style="left:966.8px;top:423.2px;width:44.2px;height:128px;background:#e3efdb"></div>
<div class="hl" style="left:14px;top:422.7px;width:123px;background:#e9e9e9"></div>
<div class="hl" style="left:14px;top:435.5px;width:123px;background:#e9e9e9"></div>
<div class="a" style="left:966.3px;top:422.7px;width:45.2px;height:13.8px;border:1px solid #e9f0e4"></div>
<div class="t" style="left:14px;top:424px;width:123px;text-align:left;padding-left:2px;">Lay Accees Routes</div>
<div class="t" style="left:137px;top:424px;width:68.4px;text-align:center;">16</div>
<div class="t" style="left:205.4px;top:424px;width:68.4px;text-align:center;">4</div>
<div class="t" style="left:273.8px;top:424px;width:68.4px;text-align:center;">0</div>
<div class="t" style="left:345.4px;top:424px;width:68.4px;text-align:center;">0</div>
<div class="t" style="left:413.8px;top:424px;width:68.4px;text-align:center;">0</div>
<div class="t" style="left:482.2px;top:424px;width:68.4px;text-align:center;">0</div>
<div class="t" style="left:553.4px;top:424px;width:68.4px;text-align:center;">0</div>
<div class="t" style="left:621.8px;top:424px;width:68.4px;text-align:center;">0</div>
<div class="t" style="left:690.2px;top:424px;width:68.4px;text-align:center;">0</div>
<div class="t" style="left:761.6px;top:424px;width:68.4px;text-align:center;">0</div>
<div class="t" style="left:830px;top:424px;width:68.4px;text-align:center;">0</div>
<div class="t" style="left:898.4px;top:424px;width:68.4px;text-align:center;">0</div>
<div class="t" style="left:966.8px;top:424px;width:44.2px;text-align:center;">$12.50</div>
<div class="hl" style="left:14px;top:435.5px;width:123px;background:#e9e9e9"></div>
<div class="hl" style="left:14px;top:448.3px;width:123px;background:#e9e9e9"></div>
<div class="a" style="left:966.3px;top:435.5px;width:45.2px;height:13.8px;border:1px solid #e9f0e4"></div>
<div class="t" style="left:14px;top:437px;width:123px;text-align:left;padding-left:2px;">Roads and Drainage</div>
<div class="t" style="left:137px;top:437px;width:68.4px;text-align:center;">5</div>
<div class="t" style="left:205.4px;top:437px;width:68.4px;text-align:center;">12</div>
<div class="t" style="left:273.8px;top:437px;width:68.4px;text-align:center;">6</div>
<div class="t" style="left:345.4px;top:437px;width:68.4px;text-align:center;">0</div>
<div class="t" style="left:413.8px;top:437px;width:68.4px;text-align:center;">0</div>
<div class="t" style="left:482.2px;top:437px;width:68.4px;text-align:center;">0</div>
<div class="t" style="left:553.4px;top:437px;width:68.4px;text-align:center;">0</div>
<div class="t" style="left:621.8px;top:437px;width:68.4px;text-align:center;">0</div>
<div class="t" style="left:690.2px;top:437px;width:68.4px;text-align:center;">0</div>
<div class="t" style="left:761.6px;top:437px;width:68.4px;text-align:center;">0</div>
<div class="t" style="left:830px;top:437px;width:68.4px;text-align:center;">0</div>
<div class="t" style="left:898.4px;top:437px;width:68.4px;text-align:center;">0</div>
<div class="t" style="left:966.8px;top:437px;width:44.2px;text-align:center;">$14.00</div>
<div class="hl" style="left:14px;top:448.3px;width:123px;background:#e9e9e9"></div>
<div class="hl" style="left:14px;top:461.1px;width:123px;background:#e9e9e9"></div>
<div class="a" style="left:966.3px;top:448.3px;width:45.2px;height:13.8px;border:1px solid #e9f0e4"></div>
<div class="t" style="left:14px;top:450px;width:123px;text-align:left;padding-left:2px;">Fences and Gates</div>
<div class="t" style="left:137px;top:450px;width:68.4px;text-align:center;">5</div>
<div class="t" style="left:205.4px;top:450px;width:68.4px;text-align:center;">4</div>
<div class="t" style="left:273.8px;top:450px;width:68.4px;text-align:center;">11</div>
<div class="t" style="left:345.4px;top:450px;width:68.4px;text-align:center;">0</div>
<div class="t" style="left:413.8px;top:450px;width:68.4px;text-align:center;">0</div>
<div class="t" style="left:482.2px;top:450px;width:68.4px;text-align:center;">0</div>
<div class="t" style="left:553.4px;top:450px;width:68.4px;text-align:center;">0</div>
<div class="t" style="left:621.8px;top:450px;width:68.4px;text-align:center;">0</div>
<div class="t" style="left:690.2px;top:450px;width:68.4px;text-align:center;">0</div>
<div class="t" style="left:761.6px;top:450px;width:68.4px;text-align:center;">0</div>
<div class="t" style="left:830px;top:450px;width:68.4px;text-align:center;">0</div>
<div class="t" style="left:898.4px;top:450px;width:68.4px;text-align:center;">0</div>
<div class="t" style="left:966.8px;top:450px;width:44.2px;text-align:center;">$11.00</div>
<div class="hl" style="left:14px;top:461.1px;width:123px;background:#e9e9e9"></div>
<div class="hl" style="left:14px;top:473.9px;width:123px;background:#e9e9e9"></div>
<div class="a" style="left:966.3px;top:461.1px;width:45.2px;height:13.8px;border:1px solid #e9f0e4"></div>
<div class="t" style="left:14px;top:463px;width:123px;text-align:left;padding-left:2px;">Dig Trenches for Cables</div>
<div class="t" style="left:137px;top:463px;width:68.4px;text-align:center;">4</div>
<div class="t" style="left:205.4px;top:463px;width:68.4px;text-align:center;">0</div>
<div class="t" style="left:273.8px;top:463px;width:68.4px;text-align:center;">0</div>
<div class="t" style="left:345.4px;top:463px;width:68.4px;text-align:center;">24</div>
<div class="t" style="left:413.8px;top:463px;width:68.4px;text-align:center;">3</div>
<div class="t" style="left:482.2px;top:463px;width:68.4px;text-align:center;">1</div>
<div class="t" style="left:553.4px;top:463px;width:68.4px;text-align:center;">0</div>
<div class="t" style="left:621.8px;top:463px;width:68.4px;text-align:center;">0</div>
<div class="t" style="left:690.2px;top:463px;width:68.4px;text-align:center;">0</div>
<div class="t" style="left:761.6px;top:463px;width:68.4px;text-align:center;">0</div>
<div class="t" style="left:830px;top:463px;width:68.4px;text-align:center;">0</div>
<div class="t" style="left:898.4px;top:463px;width:68.4px;text-align:center;">0</div>
<div class="t" style="left:966.8px;top:463px;width:44.2px;text-align:center;">$12.50</div>
<div class="hl" style="left:14px;top:473.9px;width:123px;background:#e9e9e9"></div>
<div class="hl" style="left:14px;top:486.7px;width:123px;background:#e9e9e9"></div>
<div class="a" style="left:966.3px;top:473.9px;width:45.2px;height:13.8px;border:1px solid #e9f0e4"></div>
<div class="t" style="left:14px;top:475px;width:123px;text-align:left;padding-left:2px;">Install Electrical Switchgear</div>
<div class="t" style="left:137px;top:475px;width:68.4px;text-align:center;">4</div>
<div class="t" style="left:205.4px;top:475px;width:68.4px;text-align:center;">0</div>
<div class="t" style="left:273.8px;top:475px;width:68.4px;text-align:center;">0</div>
<div class="t" style="left:345.4px;top:475px;width:68.4px;text-align:center;">0</div>
<div class="t" style="left:413.8px;top:475px;width:68.4px;text-align:center;">0</div>
<div class="t" style="left:482.2px;top:475px;width:68.4px;text-align:center;">7</div>
<div class="t" style="left:553.4px;top:475px;width:68.4px;text-align:center;">0</div>
<div class="t" style="left:621.8px;top:475px;width:68.4px;text-align:center;">0</div>
<div class="t" style="left:690.2px;top:475px;width:68.4px;text-align:center;">0</div>
<div class="t" style="left:761.6px;top:475px;width:68.4px;text-align:center;">0</div>
<div class="t" style="left:830px;top:475px;width:68.4px;text-align:center;">0</div>
<div class="t" style="left:898.4px;top:475px;width:68.4px;text-align:center;">0</div>
<div class="t" style="left:966.8px;top:475px;width:44.2px;text-align:center;">$12.50</div>
<div class="hl" style="left:14px;top:486.7px;width:123px;background:#e9e9e9"></div>
<div class="hl" style="left:14px;top:499.5px;width:123px;background:#e9e9e9"></div>
<div class="a" style="left:966.3px;top:486.7px;width:45.2px;height:13.8px;border:1px solid #e9f0e4"></div>
<div class="t" style="left:14px;top:488px;width:123px;text-align:left;padding-left:2px;">Office and HR Welfare</div>
<div class="t" style="left:137px;top:488px;width:68.4px;text-align:center;">0</div>
<div class="t" style="left:205.4px;top:488px;width:68.4px;text-align:center;">0</div>
<div class="t" style="left:273.8px;top:488px;width:68.4px;text-align:center;">0</div>
<div class="t" style="left:345.4px;top:488px;width:68.4px;text-align:center;">0</div>
<div class="t" style="left:413.8px;top:488px;width:68.4px;text-align:center;">0</div>
<div class="t" style="left:482.2px;top:488px;width:68.4px;text-align:center;">0</div>
<div class="t" style="left:553.4px;top:488px;width:68.4px;text-align:center;">16</div>
<div class="t" style="left:621.8px;top:488px;width:68.4px;text-align:center;">4</div>
<div class="t" style="left:690.2px;top:488px;width:68.4px;text-align:center;">1</div>
<div class="t" style="left:761.6px;top:488px;width:68.4px;text-align:center;">0</div>
<div class="t" style="left:830px;top:488px;width:68.4px;text-align:center;">0</div>
<div class="t" style="left:898.4px;top:488px;width:68.4px;text-align:center;">0</div>
<div class="t" style="left:966.8px;top:488px;width:44.2px;text-align:center;">$14.00</div>
<div class="hl" style="left:14px;top:499.5px;width:123px;background:#e9e9e9"></div>
<div class="hl" style="left:14px;top:512.3px;width:123px;background:#e9e9e9"></div>
<div class="a" style="left:966.3px;top:499.5px;width:45.2px;height:13.8px;border:1px solid #e9f0e4"></div>
<div class="t" style="left:14px;top:501px;width:123px;text-align:left;padding-left:2px;">Panel Frame Installation</div>
<div class="t" style="left:137px;top:501px;width:68.4px;text-align:center;">0</div>
<div class="t" style="left:205.4px;top:501px;width:68.4px;text-align:center;">0</div>
<div class="t" style="left:273.8px;top:501px;width:68.4px;text-align:center;">0</div>
<div class="t" style="left:345.4px;top:501px;width:68.4px;text-align:center;">0</div>
<div class="t" style="left:413.8px;top:501px;width:68.4px;text-align:center;">0</div>
<div class="t" style="left:482.2px;top:501px;width:68.4px;text-align:center;">0</div>
<div class="t" style="left:553.4px;top:501px;width:68.4px;text-align:center;">0</div>
<div class="t" style="left:621.8px;top:501px;width:68.4px;text-align:center;">16</div>
<div class="t" style="left:690.2px;top:501px;width:68.4px;text-align:center;">4</div>
<div class="t" style="left:761.6px;top:501px;width:68.4px;text-align:center;">0</div>
<div class="t" style="left:830px;top:501px;width:68.4px;text-align:center;">0</div>
<div class="t" style="left:898.4px;top:501px;width:68.4px;text-align:center;">0</div>
<div class="t" style="left:966.8px;top:501px;width:44.2px;text-align:center;">$9.00</div>
<div class="hl" style="left:14px;top:512.3px;width:123px;background:#e9e9e9"></div>
<div class="hl" style="left:14px;top:525.1px;width:123px;background:#e9e9e9"></div>
<div class="a" style="left:966.3px;top:512.3px;width:45.2px;height:13.8px;border:1px solid #e9f0e4"></div>
<div class="t" style="left:14px;top:514px;width:123px;text-align:left;padding-left:2px;">Building Infrastructure Cabling</div>
<div class="t" style="left:137px;top:514px;width:68.4px;text-align:center;">0</div>
<div class="t" style="left:205.4px;top:514px;width:68.4px;text-align:center;">0</div>
<div class="t" style="left:273.8px;top:514px;width:68.4px;text-align:center;">0</div>
<div class="t" style="left:345.4px;top:514px;width:68.4px;text-align:center;">0</div>
<div class="t" style="left:413.8px;top:514px;width:68.4px;text-align:center;">0</div>
<div class="t" style="left:482.2px;top:514px;width:68.4px;text-align:center;">0</div>
<div class="t" style="left:553.4px;top:514px;width:68.4px;text-align:center;">0</div>
<div class="t" style="left:621.8px;top:514px;width:68.4px;text-align:center;">0</div>
<div class="t" style="left:690.2px;top:514px;width:68.4px;text-align:center;">8</div>
<div class="t" style="left:761.6px;top:514px;width:68.4px;text-align:center;">8</div>
<div class="t" style="left:830px;top:514px;width:68.4px;text-align:center;">4</div>
<div class="t" style="left:898.4px;top:514px;width:68.4px;text-align:center;">0</div>
<div class="t" style="left:966.8px;top:514px;width:44.2px;text-align:center;">$11.00</div>
<div class="hl" style="left:14px;top:525.1px;width:123px;background:#e9e9e9"></div>
<div class="hl" style="left:14px;top:537.9px;width:123px;background:#e9e9e9"></div>
<div class="a" style="left:966.3px;top:525.1px;width:45.2px;height:13.8px;border:1px solid #e9f0e4"></div>
<div class="t" style="left:14px;top:527px;width:123px;text-align:left;padding-left:2px;">Panel Assembly</div>
<div class="t" style="left:137px;top:527px;width:68.4px;text-align:center;">0</div>
<div class="t" style="left:205.4px;top:527px;width:68.4px;text-align:center;">0</div>
<div class="t" style="left:273.8px;top:527px;width:68.4px;text-align:center;">0</div>
<div class="t" style="left:345.4px;top:527px;width:68.4px;text-align:center;">0</div>
<div class="t" style="left:413.8px;top:527px;width:68.4px;text-align:center;">0</div>
<div class="t" style="left:482.2px;top:527px;width:68.4px;text-align:center;">0</div>
<div class="t" style="left:553.4px;top:527px;width:68.4px;text-align:center;">0</div>
<div class="t" style="left:621.8px;top:527px;width:68.4px;text-align:center;">0</div>
<div class="t" style="left:690.2px;top:527px;width:68.4px;text-align:center;">0</div>
<div class="t" style="left:761.6px;top:527px;width:68.4px;text-align:center;">24</div>
<div class="t" style="left:830px;top:527px;width:68.4px;text-align:center;">3</div>
<div class="t" style="left:898.4px;top:527px;width:68.4px;text-align:center;">1</div>
<div class="t" style="left:966.8px;top:527px;width:44.2px;text-align:center;">$12.50</div>
<div class="hl" style="left:14px;top:537.9px;width:123px;background:#e9e9e9"></div>
<div class="hl" style="left:14px;top:550.7px;width:123px;background:#e9e9e9"></div>
<div class="a" style="left:966.3px;top:537.9px;width:45.2px;height:13.8px;border:1px solid #e9f0e4"></div>
<div class="t" style="left:14px;top:539px;width:123px;text-align:left;padding-left:2px;">Solar PV Module Mounting</div>
<div class="t" style="left:137px;top:539px;width:68.4px;text-align:center;">0</div>
<div class="t" style="left:205.4px;top:539px;width:68.4px;text-align:center;">0</div>
<div class="t" style="left:273.8px;top:539px;width:68.4px;text-align:center;">0</div>
<div class="t" style="left:345.4px;top:539px;width:68.4px;text-align:center;">0</div>
<div class="t" style="left:413.8px;top:539px;width:68.4px;text-align:center;">0</div>
<div class="t" style="left:482.2px;top:539px;width:68.4px;text-align:center;">0</div>
<div class="t" style="left:553.4px;top:539px;width:68.4px;text-align:center;">0</div>
<div class="t" style="left:621.8px;top:539px;width:68.4px;text-align:center;">0</div>
<div class="t" style="left:690.2px;top:539px;width:68.4px;text-align:center;">0</div>
<div class="t" style="left:761.6px;top:539px;width:68.4px;text-align:center;">0</div>
<div class="t" style="left:830px;top:539px;width:68.4px;text-align:center;">0</div>
<div class="t" style="left:898.4px;top:539px;width:68.4px;text-align:center;">5</div>
<div class="t" style="left:966.8px;top:539px;width:44.2px;text-align:center;">$12.50</div>
<div class="t" style="left:14px;top:267px;width:123px;text-align:left;padding-left:2px;">Totals</div>
<div class="t" style="left:14px;top:294px;width:123px;text-align:left;padding-left:2px;font-weight:bold;color:#111;">Net Totals</div>
<div class="t" style="left:14px;top:306px;width:123px;text-align:left;padding-left:2px;font-weight:bold;color:#111;">Overrun Costs</div>
<div class="t" style="left:14px;top:332px;width:123px;text-align:left;padding-left:2px;font-weight:bold;color:#111;">Grand Totals</div>
<div class="a" style="left:136.5px;top:265.5px;width:69.4px;height:13.8px;border:1px solid #e2e2e2"></div>
<div class="a" style="left:136.5px;top:291.1px;width:69.4px;height:13.8px;border:1px solid #e2e2e2"></div>
<div class="a" style="left:136.5px;top:303.9px;width:69.4px;height:13.8px;border:1px solid #e2e2e2"></div>
<div class="a" style="left:136.5px;top:329.5px;width:69.4px;height:13.8px;border:1px solid #e2e2e2"></div>
<div class="t" style="left:137px;top:267px;width:68.4px;text-align:center;">16</div>
<div class="t" style="left:137px;top:293px;width:68.4px;text-align:center;">$200.00</div>
<div class="t" style="left:137px;top:305px;width:68.4px;text-align:center;">$85.00</div>
<div class="t" style="left:137px;top:332px;width:68.4px;text-align:center;font-weight:bold;color:#111;">$285.00</div>
<svg class="a" style="left:137px;top:291.6px" width="5" height="5" viewBox="0 0 5 5"><path d="M0 0 H4.4 L0 4.4 Z" fill="#088208"/></svg>
<div class="a" style="left:204.9px;top:265.5px;width:69.4px;height:13.8px;border:1px solid #e2e2e2"></div>
<div class="a" style="left:204.9px;top:291.1px;width:69.4px;height:13.8px;border:1px solid #e2e2e2"></div>
<div class="a" style="left:204.9px;top:303.9px;width:69.4px;height:13.8px;border:1px solid #e2e2e2"></div>
<div class="a" style="left:204.9px;top:329.5px;width:69.4px;height:13.8px;border:1px solid #e2e2e2"></div>
<div class="t" style="left:205.4px;top:267px;width:68.4px;text-align:center;">16</div>
<div class="t" style="left:205.4px;top:293px;width:68.4px;text-align:center;">$218.00</div>
<div class="t" style="left:205.4px;top:305px;width:68.4px;text-align:center;">$86.00</div>
<div class="t" style="left:205.4px;top:332px;width:68.4px;text-align:center;font-weight:bold;color:#111;">$304.00</div>
<svg class="a" style="left:205.4px;top:291.6px" width="5" height="5" viewBox="0 0 5 5"><path d="M0 0 H4.4 L0 4.4 Z" fill="#088208"/></svg>
<div class="a" style="left:273.3px;top:265.5px;width:69.4px;height:13.8px;border:1px solid #e2e2e2"></div>
<div class="a" style="left:273.3px;top:291.1px;width:69.4px;height:13.8px;border:1px solid #e2e2e2"></div>
<div class="a" style="left:273.3px;top:303.9px;width:69.4px;height:13.8px;border:1px solid #e2e2e2"></div>
<div class="a" style="left:273.3px;top:329.5px;width:69.4px;height:13.8px;border:1px solid #e2e2e2"></div>
<div class="t" style="left:273.8px;top:267px;width:68.4px;text-align:center;">17</div>
<div class="t" style="left:273.8px;top:293px;width:68.4px;text-align:center;">$205.00</div>
<div class="t" style="left:273.8px;top:305px;width:68.4px;text-align:center;">$87.00</div>
<div class="t" style="left:273.8px;top:332px;width:68.4px;text-align:center;font-weight:bold;color:#111;">$292.00</div>
<svg class="a" style="left:273.8px;top:291.6px" width="5" height="5" viewBox="0 0 5 5"><path d="M0 0 H4.4 L0 4.4 Z" fill="#088208"/></svg>
<div class="a" style="left:344.9px;top:265.5px;width:69.4px;height:13.8px;border:1px solid #e2e2e2"></div>
<div class="a" style="left:344.9px;top:291.1px;width:69.4px;height:13.8px;border:1px solid #e2e2e2"></div>
<div class="a" style="left:344.9px;top:303.9px;width:69.4px;height:13.8px;border:1px solid #e2e2e2"></div>
<div class="a" style="left:344.9px;top:329.5px;width:69.4px;height:13.8px;border:1px solid #e2e2e2"></div>
<div class="t" style="left:345.4px;top:267px;width:68.4px;text-align:center;">24</div>
<div class="t" style="left:345.4px;top:293px;width:68.4px;text-align:center;">$300.00</div>
<div class="t" style="left:345.4px;top:305px;width:68.4px;text-align:center;">$35.00</div>
<div class="t" style="left:345.4px;top:332px;width:68.4px;text-align:center;font-weight:bold;color:#111;">$335.00</div>
<svg class="a" style="left:345.4px;top:291.6px" width="5" height="5" viewBox="0 0 5 5"><path d="M0 0 H4.4 L0 4.4 Z" fill="#088208"/></svg>
<div class="a" style="left:413.3px;top:265.5px;width:69.4px;height:13.8px;border:1px solid #e2e2e2"></div>
<div class="a" style="left:413.3px;top:291.1px;width:69.4px;height:13.8px;border:1px solid #e2e2e2"></div>
<div class="a" style="left:413.3px;top:303.9px;width:69.4px;height:13.8px;border:1px solid #e2e2e2"></div>
<div class="a" style="left:413.3px;top:329.5px;width:69.4px;height:13.8px;border:1px solid #e2e2e2"></div>
<div class="t" style="left:413.8px;top:267px;width:68.4px;text-align:center;">3</div>
<div class="t" style="left:413.8px;top:293px;width:68.4px;text-align:center;">$37.50</div>
<div class="t" style="left:413.8px;top:305px;width:68.4px;text-align:center;">$36.00</div>
<div class="t" style="left:413.8px;top:332px;width:68.4px;text-align:center;font-weight:bold;color:#111;">$73.50</div>
<svg class="a" style="left:413.8px;top:291.6px" width="5" height="5" viewBox="0 0 5 5"><path d="M0 0 H4.4 L0 4.4 Z" fill="#088208"/></svg>
<div class="a" style="left:481.7px;top:265.5px;width:69.4px;height:13.8px;border:1px solid #e2e2e2"></div>
<div class="a" style="left:481.7px;top:291.1px;width:69.4px;height:13.8px;border:1px solid #e2e2e2"></div>
<div class="a" style="left:481.7px;top:303.9px;width:69.4px;height:13.8px;border:1px solid #e2e2e2"></div>
<div class="a" style="left:481.7px;top:329.5px;width:69.4px;height:13.8px;border:1px solid #e2e2e2"></div>
<div class="t" style="left:482.2px;top:267px;width:68.4px;text-align:center;">8</div>
<div class="t" style="left:482.2px;top:293px;width:68.4px;text-align:center;">$100.00</div>
<div class="t" style="left:482.2px;top:305px;width:68.4px;text-align:center;">$37.00</div>
<div class="t" style="left:482.2px;top:332px;width:68.4px;text-align:center;font-weight:bold;color:#111;">$137.00</div>
<svg class="a" style="left:482.2px;top:291.6px" width="5" height="5" viewBox="0 0 5 5"><path d="M0 0 H4.4 L0 4.4 Z" fill="#088208"/></svg>
<div class="a" style="left:552.9px;top:265.5px;width:69.4px;height:13.8px;border:1px solid #e2e2e2"></div>
<div class="a" style="left:552.9px;top:291.1px;width:69.4px;height:13.8px;border:1px solid #e2e2e2"></div>
<div class="a" style="left:552.9px;top:303.9px;width:69.4px;height:13.8px;border:1px solid #e2e2e2"></div>
<div class="a" style="left:552.9px;top:329.5px;width:69.4px;height:13.8px;border:1px solid #e2e2e2"></div>
<div class="t" style="left:553.4px;top:267px;width:68.4px;text-align:center;">16</div>
<div class="t" style="left:553.4px;top:293px;width:68.4px;text-align:center;">$224.00</div>
<div class="t" style="left:553.4px;top:305px;width:68.4px;text-align:center;">$40.00</div>
<div class="t" style="left:553.4px;top:332px;width:68.4px;text-align:center;font-weight:bold;color:#111;">$264.00</div>
<svg class="a" style="left:553.4px;top:291.6px" width="5" height="5" viewBox="0 0 5 5"><path d="M0 0 H4.4 L0 4.4 Z" fill="#088208"/></svg>
<div class="a" style="left:621.3px;top:265.5px;width:69.4px;height:13.8px;border:1px solid #e2e2e2"></div>
<div class="a" style="left:621.3px;top:291.1px;width:69.4px;height:13.8px;border:1px solid #e2e2e2"></div>
<div class="a" style="left:621.3px;top:303.9px;width:69.4px;height:13.8px;border:1px solid #e2e2e2"></div>
<div class="a" style="left:621.3px;top:329.5px;width:69.4px;height:13.8px;border:1px solid #e2e2e2"></div>
<div class="t" style="left:621.8px;top:267px;width:68.4px;text-align:center;">20</div>
<div class="t" style="left:621.8px;top:293px;width:68.4px;text-align:center;">$200.00</div>
<div class="t" style="left:621.8px;top:305px;width:68.4px;text-align:center;">$41.00</div>
<div class="t" style="left:621.8px;top:332px;width:68.4px;text-align:center;font-weight:bold;color:#111;">$241.00</div>
<svg class="a" style="left:621.8px;top:291.6px" width="5" height="5" viewBox="0 0 5 5"><path d="M0 0 H4.4 L0 4.4 Z" fill="#088208"/></svg>
<div class="a" style="left:689.7px;top:265.5px;width:69.4px;height:13.8px;border:1px solid #e2e2e2"></div>
<div class="a" style="left:689.7px;top:291.1px;width:69.4px;height:13.8px;border:1px solid #e2e2e2"></div>
<div class="a" style="left:689.7px;top:303.9px;width:69.4px;height:13.8px;border:1px solid #e2e2e2"></div>
<div class="a" style="left:689.7px;top:329.5px;width:69.4px;height:13.8px;border:1px solid #e2e2e2"></div>
<div class="t" style="left:690.2px;top:267px;width:68.4px;text-align:center;">13</div>
<div class="t" style="left:690.2px;top:293px;width:68.4px;text-align:center;">$138.00</div>
<div class="t" style="left:690.2px;top:305px;width:68.4px;text-align:center;">$42.00</div>
<div class="t" style="left:690.2px;top:332px;width:68.4px;text-align:center;font-weight:bold;color:#111;">$180.00</div>
<svg class="a" style="left:690.2px;top:291.6px" width="5" height="5" viewBox="0 0 5 5"><path d="M0 0 H4.4 L0 4.4 Z" fill="#088208"/></svg>
<div class="a" style="left:761.1px;top:265.5px;width:69.4px;height:13.8px;border:1px solid #e2e2e2"></div>
<div class="a" style="left:761.1px;top:291.1px;width:69.4px;height:13.8px;border:1px solid #e2e2e2"></div>
<div class="a" style="left:761.1px;top:303.9px;width:69.4px;height:13.8px;border:1px solid #e2e2e2"></div>
<div class="a" style="left:761.1px;top:329.5px;width:69.4px;height:13.8px;border:1px solid #e2e2e2"></div>
<div class="t" style="left:761.6px;top:267px;width:68.4px;text-align:center;">32</div>
<div class="t" style="left:761.6px;top:293px;width:68.4px;text-align:center;">$388.00</div>
<div class="t" style="left:761.6px;top:305px;width:68.4px;text-align:center;">$25.00</div>
<div class="t" style="left:761.6px;top:332px;width:68.4px;text-align:center;font-weight:bold;color:#111;">$413.00</div>
<svg class="a" style="left:761.6px;top:291.6px" width="5" height="5" viewBox="0 0 5 5"><path d="M0 0 H4.4 L0 4.4 Z" fill="#088208"/></svg>
<div class="a" style="left:829.5px;top:265.5px;width:69.4px;height:13.8px;border:1px solid #e2e2e2"></div>
<div class="a" style="left:829.5px;top:291.1px;width:69.4px;height:13.8px;border:1px solid #e2e2e2"></div>
<div class="a" style="left:829.5px;top:303.9px;width:69.4px;height:13.8px;border:1px solid #e2e2e2"></div>
<div class="a" style="left:829.5px;top:329.5px;width:69.4px;height:13.8px;border:1px solid #e2e2e2"></div>
<div class="t" style="left:830px;top:267px;width:68.4px;text-align:center;">7</div>
<div class="t" style="left:830px;top:293px;width:68.4px;text-align:center;">$81.50</div>
<div class="t" style="left:830px;top:305px;width:68.4px;text-align:center;">$26.00</div>
<div class="t" style="left:830px;top:332px;width:68.4px;text-align:center;font-weight:bold;color:#111;">$107.50</div>
<svg class="a" style="left:830px;top:291.6px" width="5" height="5" viewBox="0 0 5 5"><path d="M0 0 H4.4 L0 4.4 Z" fill="#088208"/></svg>
<div class="a" style="left:897.9px;top:265.5px;width:69.4px;height:13.8px;border:1px solid #e2e2e2"></div>
<div class="a" style="left:897.9px;top:291.1px;width:69.4px;height:13.8px;border:1px solid #e2e2e2"></div>
<div class="a" style="left:897.9px;top:303.9px;width:69.4px;height:13.8px;border:1px solid #e2e2e2"></div>
<div class="a" style="left:897.9px;top:329.5px;width:69.4px;height:13.8px;border:1px solid #e2e2e2"></div>
<div class="t" style="left:898.4px;top:267px;width:68.4px;text-align:center;">6</div>
<div class="t" style="left:898.4px;top:293px;width:68.4px;text-align:center;">$75.00</div>
<div class="t" style="left:898.4px;top:305px;width:68.4px;text-align:center;">$27.00</div>
<div class="t" style="left:898.4px;top:332px;width:68.4px;text-align:center;font-weight:bold;color:#111;">$102.00</div>
<svg class="a" style="left:898.4px;top:291.6px" width="5" height="5" viewBox="0 0 5 5"><path d="M0 0 H4.4 L0 4.4 Z" fill="#088208"/></svg>
<div class="a" style="left:1011px;top:52px;width:13px;height:520.6px;background:#eef0f3"></div>
<div class="a" style="left:1012px;top:53px;width:11px;height:520.6px;background:#f9f9f9;border-radius:5px"></div>
<svg class="a" style="left:1014.5px;top:55.5px" width="7" height="5" viewBox="0 0 7 5"><path d="M0.5 4.5 L3.5 0.5 L6.5 4.5 Z" fill="#6a6a6a"/></svg>
<div class="a" style="left:1015px;top:63.5px;width:6px;height:179.5px;background:#727272;border-radius:3px"></div>
<svg class="a" style="left:1014.5px;top:566px" width="7" height="5" viewBox="0 0 7 5"><path d="M0.5 0.5 L3.5 4.5 L6.5 0.5 Z" fill="#6a6a6a"/></svg>
<div class="a" style="left:0;top:572.6px;width:1024px;height:21.399999999999977px;background:#e7e9ec"></div>
<svg class="a" style="left:16px;top:579px" width="6" height="9" viewBox="0 0 6 9"><path d="M5 0.8 L1.2 4.5 L5 8.2" fill="none" stroke="#9a9a9a" stroke-width="0.9"/></svg>
<svg class="a" style="left:37.5px;top:579px" width="6" height="9" viewBox="0 0 6 9"><path d="M1 0.8 L4.8 4.5 L1 8.2" fill="none" stroke="#9a9a9a" stroke-width="0.9"/></svg>
<div class="a" style="left:76px;top:577.5px;width:41px;text-align:center;font-size:9.2px;line-height:12px;color:#333;white-space:nowrap">How To</div>
<div class="a" style="left:121.5px;top:577px;width:1px;height:13px;background:#cfd1d4"></div>
<div class="a" style="left:126px;top:577.5px;width:53px;text-align:center;font-size:9.2px;line-height:12px;color:#333;white-space:nowrap">Worksheet</div>
<div class="a" style="left:183.5px;top:577px;width:1px;height:13px;background:#cfd1d4"></div>
<div class="a" style="left:186px;top:571.6px;width:59px;height:19.399999999999977px;background:#f8f8f8;border-radius:0 0 3px 3px"></div>
<div class="a" style="left:186px;top:576px;width:59.5px;text-align:center;font-size:9.1px;line-height:12px;color:#1a1a1a;-webkit-text-stroke:0.35px #1a1a1a;white-space:nowrap">Civil Works</div>
<div class="a" style="left:192px;top:588.5px;width:47.5px;height:1.3px;background:#1e7b45"></div>
<div class="a" style="left:247.5px;top:577px;width:1px;height:13px;background:#cfd1d4"></div>
<div class="a" style="left:251px;top:576px;width:77px;height:15.5px;background:#dbe2ee;border-radius:3px"></div>
<div class="a" style="left:251px;top:577.5px;width:77px;text-align:center;font-size:9.2px;line-height:12px;color:#333;white-space:nowrap">Electrical Works</div>
<div class="a" style="left:331.5px;top:577px;width:1px;height:13px;background:#cfd1d4"></div>
<div class="a" style="left:335px;top:576px;width:73px;height:15.5px;background:#dde3ea;border-radius:3px"></div>
<div class="a" style="left:335px;top:577.5px;width:73px;text-align:center;font-size:9.2px;line-height:12px;color:#333;white-space:nowrap">Plant Tool Hire</div>
<div class="a" style="left:411.5px;top:577px;width:1px;height:13px;background:#cfd1d4"></div>
<div class="a" style="left:414px;top:576px;width:48px;height:15.5px;background:#d6d6d6;border-radius:3px"></div>
<div class="a" style="left:414px;top:577.5px;width:48px;text-align:center;font-size:9.2px;line-height:12px;color:#333;white-space:nowrap">HR Costs</div>
<div class="a" style="left:465.5px;top:577px;width:1px;height:13px;background:#cfd1d4"></div>
<div class="a" style="left:469px;top:576px;width:94px;height:15.5px;background:#7a7a7a;border-radius:3px"></div>
<div class="a" style="left:469px;top:577.5px;width:94px;text-align:center;font-size:9.2px;line-height:12px;color:#f5f5f5;white-space:nowrap">Total Supplier Costs</div>
<div class="a" style="left:566.5px;top:577px;width:1px;height:13px;background:#cfd1d4"></div>
<div class="a" style="left:569px;top:576px;width:38px;height:15.5px;background:#f2f3f4;border-radius:3px"></div>
<div class="a" style="left:569px;top:577.5px;width:38px;text-align:center;font-size:9.2px;line-height:12px;color:#333;white-space:nowrap">Charts</div>
<div class="a" style="left:610.5px;top:577px;width:1px;height:13px;background:#cfd1d4"></div>
<svg class="a" style="left:637.5px;top:578.5px" width="9" height="9" viewBox="0 0 9 9"><path d="M4.5 0.5 V8.5 M0.5 4.5 H8.5" stroke="#444" stroke-width="1"/></svg>
<div class="a" style="left:830.2px;top:580.5px;width:1.5px;height:1.5px;background:#444;border-radius:50%"></div>
<div class="a" style="left:830.2px;top:583.5px;width:1.5px;height:1.5px;background:#444;border-radius:50%"></div>
<div class="a" style="left:830.2px;top:586.5px;width:1.5px;height:1.5px;background:#444;border-radius:50%"></div>
<div class="a" style="left:842.5px;top:578px;width:169px;height:10.5px;background:#f7f7f8;border-radius:5px"></div>
<svg class="a" style="left:845px;top:580.5px" width="5" height="6" viewBox="0 0 5 6"><path d="M4.5 0.3 L0.5 3 L4.5 5.7 Z" fill="#6a6a6a"/></svg>
<div class="a" style="left:853px;top:580.5px;width:52px;height:6px;background:#707070;border-radius:3px"></div>
<svg class="a" style="left:1004.5px;top:580.5px" width="5" height="6" viewBox="0 0 5 6"><path d="M0.5 0.3 L4.5 3 L0.5 5.7 Z" fill="#6a6a6a"/></svg>
<div class="a" style="left:0;top:594px;width:1024px;height:12px;background:#f3f3f3;border-top:1px solid #dedede"></div>
<div class="a" style="left:7.5px;top:596.5px;font-size:7.2px;color:#444;line-height:10px">Ready</div>
<svg class="a" style="left:0;top:592px" width="80" height="14" viewBox="0 0 80 14"><g fill="none" stroke="#505050" stroke-width="0.9"><path d="M40.6 14 V5.6 H49.6 V8"/><circle cx="46.3" cy="11" r="2.6"/></g><rect x="40.2" y="5.2" width="9.8" height="1.8" fill="#505050"/><path d="M46.3 9.9 L47.4 11 L46.3 12.1 L45.2 11 Z" fill="#222"/><g fill="none" stroke="#505050" stroke-width="0.9" stroke-linecap="round"><circle cx="65.6" cy="6.6" r="1.3"/><path d="M63.2 6.2 L61.8 7.4 L63.2 8.6 M68 6.2 L69.4 7.4 L68 8.6"/><path d="M65.6 8.6 V11 L63.6 13.8 M65.6 11 L68 13.8 M62.6 10.2 H68.6"/></g></svg>
<div class="a" style="left:73px;top:596.5px;font-size:7px;color:#222;line-height:10px;font-weight:bold;white-space:nowrap">Accessibility: Investigate</div>
<div class="a" style="left:826.5px;top:594.5px;width:26px;height:11.5px;background:#d9d9d9"></div>
<svg class="a" style="left:834px;top:596.5px" width="10" height="9" viewBox="0 0 10 9"><path d="M0.5 0.5 H9.5 V8.5 H0.5 Z M0.5 3.2 H9.5 M0.5 5.9 H9.5 M3.5 0.5 V8.5 M6.5 0.5 V8.5" fill="none" stroke="#444" stroke-width="0.8"/></svg>
<svg class="a" style="left:861px;top:596.5px" width="10" height="9" viewBox="0 0 10 9"><rect x="0.5" y="0.5" width="9" height="8" fill="none" stroke="#555" stroke-width="0.8"/><rect x="2.5" y="2" width="5" height="5" fill="none" stroke="#555" stroke-width="0.8"/></svg>
<svg class="a" style="left:887.5px;top:596px" width="10" height="10" viewBox="0 0 10 10"><path d="M0.5 0.5 V9 H9.5 V0.5 M3 0.5 V4.5 H7 V0.5" fill="none" stroke="#555" stroke-width="0.8"/></svg>
<div class="a" style="left:909.5px;top:600.5px;width:5px;height:1px;background:#555"></div>
<div class="a" style="left:918.5px;top:600.5px;width:66px;height:1px;background:#b5b5b5"></div>
<div class="a" style="left:951px;top:597.5px;width:2.5px;height:7px;background:#555"></div>
<svg class="a" style="left:986.5px;top:597px" width="7" height="7" viewBox="0 0 7 7"><path d="M3.5 0.5 V6.5 M0.5 3.5 H6.5" stroke="#555" stroke-width="0.9"/></svg>
<div class="a" style="left:1002px;top:596.5px;font-size:7px;color:#444;line-height:10px">100%</div>
</body></html>
